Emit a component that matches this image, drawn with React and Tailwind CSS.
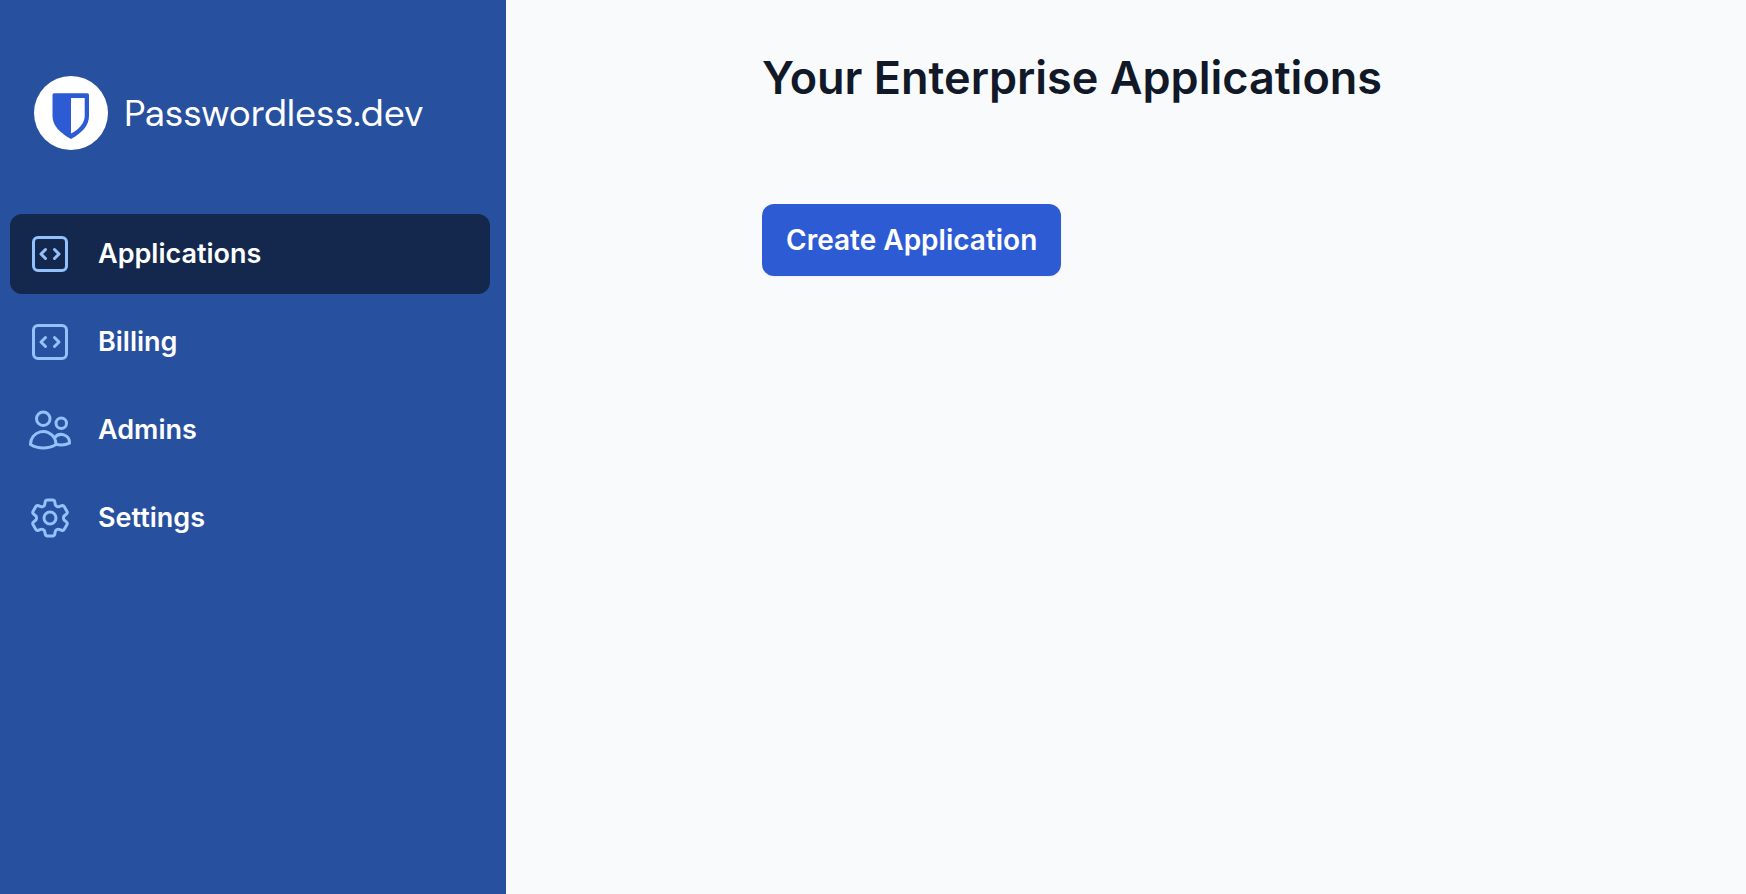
import { HiOutlineCodeBracketSquare, HiOutlineUsers, HiOutlineCog6Tooth } from "react-icons/hi2";

const navItems = [
  { label: "Applications", icon: HiOutlineCodeBracketSquare, active: true },
  { label: "Billing", icon: HiOutlineCodeBracketSquare },
  { label: "Admins", icon: HiOutlineUsers },
  { label: "Settings", icon: HiOutlineCog6Tooth },
];

function Logo() {
  return (
    <svg viewBox="0 0 74 74" className="size-[74px] shrink-0" aria-hidden="true">
      <circle cx="37" cy="37" r="37" fill="#fff" />
      <path
        d="M20.2 17.2H53.3Q55 17.2 55 18.9V40C55 50 47.5 57 37.8 62.6Q37 63.2 36.2 62.6C26.5 57 18.5 50 18.5 40V18.9Q18.5 17.2 20.2 17.2Z"
        fill="#2d5bd4"
      />
      <path d="M37 22H50.7V40C50.7 47.5 44.5 53.5 37 57.5Z" fill="#fff" />
    </svg>
  );
}

export default function App() {
  return (
    <div className="flex min-h-screen bg-[#f9fafc] font-[Inter,sans-serif]">
      <aside className="w-[506px] shrink-0 bg-[#27509e] pt-[76px]">
        <a href="#" className="flex items-center gap-4 pl-[34px] text-white">
          <Logo />
          <span className="font-['DM_Sans',Inter,sans-serif] text-[37px] leading-10 font-normal">Passwordless.dev</span>
        </a>
        <nav className="mt-16 flex flex-col gap-2 pl-2.5 pr-4">
          {navItems.map(({ label, icon: Icon, active }) => (
            <a
              key={label}
              href="#"
              aria-current={active ? "page" : undefined}
              className={`flex h-20 items-center gap-6 rounded-xl px-4 text-[27px] leading-10 font-semibold text-white ${
                active ? "bg-[#14284d]" : ""
              }`}
            >
              <Icon className="size-12 shrink-0 text-[#93c1fc]" aria-hidden="true" />
              {label}
            </a>
          ))}
        </nav>
      </aside>
      <main className="flex-1 pt-12 pl-64">
        <h1 className="text-[45px] leading-[60px] font-semibold text-[#111827]">Your Enterprise Applications</h1>
        <button
          type="button"
          className="mt-24 h-[72px] rounded-xl bg-[#2d5bd4] px-6 text-[28px] leading-10 font-semibold text-white shadow-xs"
        >
          Create Application
        </button>
      </main>
    </div>
  );
}
